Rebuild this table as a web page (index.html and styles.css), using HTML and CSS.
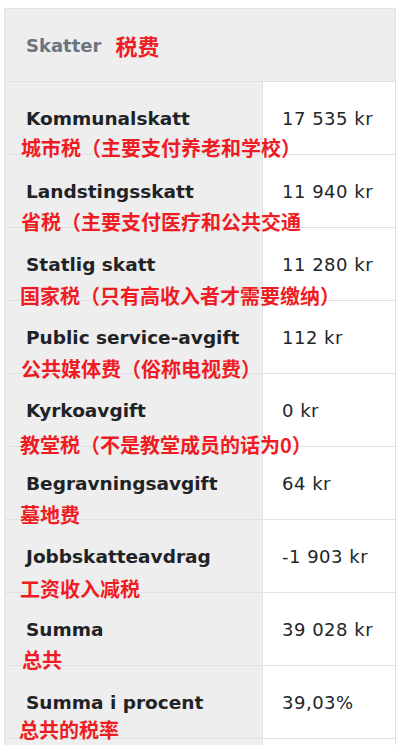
FILE: index.html
```html
<!DOCTYPE html>
<html lang="sv">
<head>
<meta charset="utf-8">
<title>Skatter</title>
<link rel="stylesheet" href="styles.css">
</head>
<body>
<div class="tax-table">
  <div class="head"><span class="head-title">Skatter</span><span class="head-note">税费</span></div>
  <div class="row r1"><div class="label">Kommunalskatt</div><div class="value">17 535 kr</div><span class="note">城市税（主要支付养老和学校）</span></div>
  <div class="row r2"><div class="label">Landstingsskatt</div><div class="value">11 940 kr</div><span class="note">省税（主要支付医疗和公共交通</span></div>
  <div class="row r3"><div class="label">Statlig skatt</div><div class="value">11 280 kr</div><span class="note">国家税（只有高收入者才需要缴纳）</span></div>
  <div class="row r4"><div class="label">Public service-avgift</div><div class="value">112 kr</div><span class="note">公共媒体费（俗称电视费）</span></div>
  <div class="row r5"><div class="label">Kyrkoavgift</div><div class="value">0 kr</div><span class="note">教堂税（不是教堂成员的话为0）</span></div>
  <div class="row r6"><div class="label">Begravningsavgift</div><div class="value">64 kr</div><span class="note">墓地费</span></div>
  <div class="row r7"><div class="label">Jobbskatteavdrag</div><div class="value">-1 903 kr</div><span class="note">工资收入减税</span></div>
  <div class="row r8"><div class="label">Summa</div><div class="value">39 028 kr</div><span class="note">总共</span></div>
  <div class="row r9"><div class="label">Summa i procent</div><div class="value">39,03%</div><span class="note">总共的税率</span></div>
  <div class="row r10"><div class="label"></div><div class="value"></div></div>
</div>
</body>
</html>
```
FILE: styles.css
```css
html, body {
  margin: 0;
  padding: 0;
  background: #fff;
}
body {
  padding: 8px 5px 0 4px;
  font-family: "DejaVu Sans", Verdana, sans-serif;
  color: #212529;
}
.tax-table {
  width: 392px;
  border: 1px solid #dee2e6;
  border-bottom: none;
  box-sizing: border-box;
}
.head {
  height: 72px;
  background: #eeeeee;
  display: flex;
  align-items: center;
  padding-left: 21px;
}
.head-title {
  font-size: 18px;
  font-weight: bold;
  color: #6c757d;
}
.head-note {
  margin-left: 14px;
  font-family: "Noto Sans CJK SC", sans-serif;
  font-weight: bold;
  font-size: 22px;
  line-height: 22px;
  color: #f01c24;
}
.row {
  position: relative;
  display: grid;
  grid-template-columns: 257px 1fr;
  border-top: 1px solid #dee2e6;
}
.label, .value {
  height: 72px;
  display: flex;
  align-items: center;
  font-size: 18px;
}
.label {
  background: #eeeeee;
  font-weight: bold;
  font-size: 18.5px;
  padding-left: 21px;
  color: #1f2326;
}
.value {
  border-left: 1px solid #dee2e6;
  padding-left: 19px;
  letter-spacing: 0.5px;
}
.note {
  position: absolute;
  z-index: 1;
  left: 16px;
  top: 56px;
  font-family: "Noto Sans CJK SC", sans-serif;
  font-weight: bold;
  font-size: 20px;
  line-height: 20px;
  color: #f01c24;
  white-space: nowrap;
}
.r2 .note { top: 56.5px; }
.r3 .note { top: 57.5px; left: 15px; }
.r4 .note { top: 57.5px; }
.r5 .note { top: 61px; left: 15px; }
.r6 .note { top: 58px; left: 15px; }
.r7 .note { top: 58.5px; left: 15px; }
.r8 .note { top: 57px; left: 17px; }
.r9 .note { top: 54px; left: 14px; }
```
